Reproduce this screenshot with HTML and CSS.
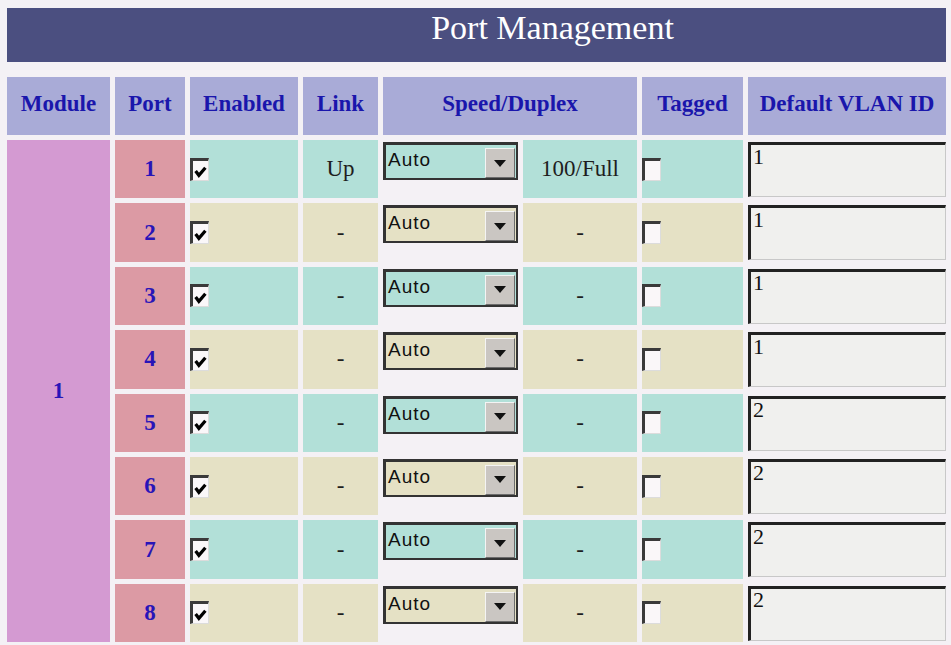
FILE: index.html
```html
<!DOCTYPE html>
<html>
	<head>
		<meta charset="utf-8">
		<title>Port Management</title>
		<link rel="stylesheet" href="styles.css">
	</head>
	<body>
		<div class="title">Port Management</div>
		<table class="ports">
			<colgroup>
				<col style="width:103px">
				<col style="width:70px">
				<col style="width:108px">
				<col style="width:75px">
				<col style="width:135px">
				<col style="width:114px">
				<col style="width:101px">
				<col style="width:198px">
			</colgroup>
			<thead>
				<tr>
					<th>Module</th>
					<th>Port</th>
					<th>Enabled</th>
					<th>Link</th>
					<th colspan="2">Speed/Duplex</th>
					<th>Tagged</th>
					<th>Default VLAN ID</th>
				</tr>
			</thead>
			<tbody>
				<tr class="odd">
					<td class="mod" rowspan="8">1</td>
					<td class="port">1</td>
					<td class="en"><span class="chk"><svg viewBox="0 0 12 12"><polyline points="1.5,5.5 4.5,9.5 10.5,2.5"/></svg></span></td>
					<td class="link">Up</td>
					<td class="spd"><div class="sel"><span>Auto</span><span class="btn"></span></div></td>
					<td class="dup">100/Full</td>
					<td class="tag"><span class="chk"></span></td>
					<td class="vid"><input class="vlan" type="text" value="1"></td>
				</tr>
				<tr class="even">
					<td class="port">2</td>
					<td class="en"><span class="chk"><svg viewBox="0 0 12 12"><polyline points="1.5,5.5 4.5,9.5 10.5,2.5"/></svg></span></td>
					<td class="link">-</td>
					<td class="spd"><div class="sel"><span>Auto</span><span class="btn"></span></div></td>
					<td class="dup">-</td>
					<td class="tag"><span class="chk"></span></td>
					<td class="vid"><input class="vlan" type="text" value="1"></td>
				</tr>
				<tr class="odd">
					<td class="port">3</td>
					<td class="en"><span class="chk"><svg viewBox="0 0 12 12"><polyline points="1.5,5.5 4.5,9.5 10.5,2.5"/></svg></span></td>
					<td class="link">-</td>
					<td class="spd"><div class="sel"><span>Auto</span><span class="btn"></span></div></td>
					<td class="dup">-</td>
					<td class="tag"><span class="chk"></span></td>
					<td class="vid"><input class="vlan" type="text" value="1"></td>
				</tr>
				<tr class="even">
					<td class="port">4</td>
					<td class="en"><span class="chk"><svg viewBox="0 0 12 12"><polyline points="1.5,5.5 4.5,9.5 10.5,2.5"/></svg></span></td>
					<td class="link">-</td>
					<td class="spd"><div class="sel"><span>Auto</span><span class="btn"></span></div></td>
					<td class="dup">-</td>
					<td class="tag"><span class="chk"></span></td>
					<td class="vid"><input class="vlan" type="text" value="1"></td>
				</tr>
				<tr class="odd">
					<td class="port">5</td>
					<td class="en"><span class="chk"><svg viewBox="0 0 12 12"><polyline points="1.5,5.5 4.5,9.5 10.5,2.5"/></svg></span></td>
					<td class="link">-</td>
					<td class="spd"><div class="sel"><span>Auto</span><span class="btn"></span></div></td>
					<td class="dup">-</td>
					<td class="tag"><span class="chk"></span></td>
					<td class="vid"><input class="vlan" type="text" value="2"></td>
				</tr>
				<tr class="even">
					<td class="port">6</td>
					<td class="en"><span class="chk"><svg viewBox="0 0 12 12"><polyline points="1.5,5.5 4.5,9.5 10.5,2.5"/></svg></span></td>
					<td class="link">-</td>
					<td class="spd"><div class="sel"><span>Auto</span><span class="btn"></span></div></td>
					<td class="dup">-</td>
					<td class="tag"><span class="chk"></span></td>
					<td class="vid"><input class="vlan" type="text" value="2"></td>
				</tr>
				<tr class="odd">
					<td class="port">7</td>
					<td class="en"><span class="chk"><svg viewBox="0 0 12 12"><polyline points="1.5,5.5 4.5,9.5 10.5,2.5"/></svg></span></td>
					<td class="link">-</td>
					<td class="spd"><div class="sel"><span>Auto</span><span class="btn"></span></div></td>
					<td class="dup">-</td>
					<td class="tag"><span class="chk"></span></td>
					<td class="vid"><input class="vlan" type="text" value="2"></td>
				</tr>
				<tr class="even">
					<td class="port">8</td>
					<td class="en"><span class="chk"><svg viewBox="0 0 12 12"><polyline points="1.5,5.5 4.5,9.5 10.5,2.5"/></svg></span></td>
					<td class="link">-</td>
					<td class="spd"><div class="sel"><span>Auto</span><span class="btn"></span></div></td>
					<td class="dup">-</td>
					<td class="tag"><span class="chk"></span></td>
					<td class="vid"><input class="vlan" type="text" value="2"></td>
				</tr>
			</tbody>
		</table>
	</body>
</html>
```

FILE: styles.css
```css
*{margin:0;padding:0;}
body{background:#f4f1f5;font-family:"Liberation Serif","Times New Roman",serif;}
div.title{margin:8px 5px 0 7px;height:54px;box-sizing:border-box;padding-left:152px;background:#4b4f80;color:#fff;font-size:34px;line-height:40px;text-align:center;}
table.ports{width:949px;margin:10px 0 0 2px;border-spacing:5px;table-layout:fixed;}
table.ports thead tr{height:58px;}
table.ports thead th{background:#a9abd7;color:#1a16ac;font-size:23px;font-weight:bold;padding:0 0 4px;vertical-align:middle;}
table.ports tbody tr{height:58.4px;}
table.ports tbody td{padding:0;font-size:23px;color:#1e1e1e;text-align:center;vertical-align:middle;}
table.ports tbody td.mod,table.ports tbody td.port{color:#2814b8;font-weight:bold;}
td.mod{background:#d49ad2;}
td.port{background:#dc9aa4;}
tr.odd td.en,tr.odd td.link,tr.odd td.dup,tr.odd td.tag,tr.odd div.sel{background:#b2e0d8;}
tr.even td.en,tr.even td.link,tr.even td.dup,tr.even td.tag,tr.even div.sel{background:#e5e1c5;}
table.ports tbody td.en,table.ports tbody td.tag{text-align:left;font-size:0;}
table.ports tbody td.spd{vertical-align:top;padding-top:2px;}
table.ports tbody td.vid{vertical-align:top;padding-top:2px;}
span.chk{display:inline-block;width:19px;height:23px;box-sizing:border-box;border-style:solid;border-width:3px 1px 1px 3px;border-color:#3a3a3a #dcdcdc #dcdcdc #3a3a3a;background:#faf7f9;vertical-align:middle;}
span.chk svg{display:block;width:13px;height:13px;margin:4px 0 0 1px;fill:none;stroke:#000;stroke-width:3;}
div.sel{display:flex;justify-content:space-between;height:38px;box-sizing:border-box;border:2px solid #333;border-top-width:3px;border-left-width:3px;padding:0 1px 0 2px;font-family:"Liberation Sans",Arial,sans-serif;font-size:19px;letter-spacing:1px;color:#111;text-align:left;line-height:30px;}
div.sel span.btn{align-self:flex-end;display:flex;align-items:center;justify-content:center;width:30px;height:30px;box-sizing:border-box;background:#cac6c2;border:1px solid;border-color:#f4f4f4 #6c6c6c #6c6c6c #f4f4f4;}
div.sel span.btn::after{content:"";border-left:6px solid transparent;border-right:6px solid transparent;border-top:7px solid #111;}
input.vlan{display:block;width:100%;height:55px;box-sizing:border-box;border-style:solid;border-width:3px 1px 1px 3px;border-color:#222 #c8c8c8 #c8c8c8 #222;background:#f0f0ee;padding:0 0 28px 2px;font-family:"Liberation Serif","Times New Roman",serif;font-size:22px;color:#111;outline:none;}
```
